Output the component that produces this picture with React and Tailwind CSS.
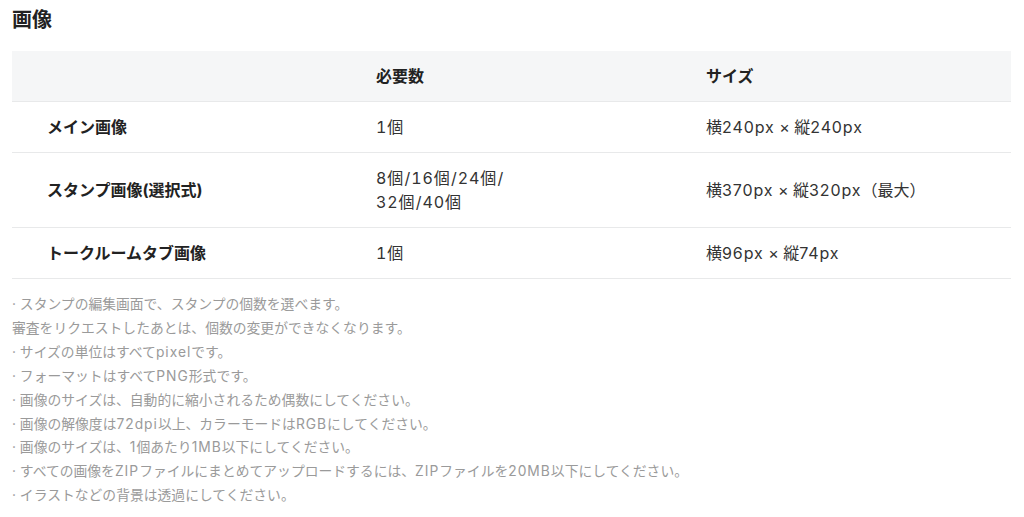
function Mixed({ text, latin, slash }) {
  const parts = text.split(/([A-Za-z0-9]+|\/)/);
  return (
    <>
      {parts.map((p, i) =>
        i % 2 === 1 ? (
          <span key={i} className={p === "/" ? slash || latin : latin}>
            {p}
          </span>
        ) : (
          <span key={i}>{p}</span>
        )
      )}
    </>
  );
}

export default function App() {
  const rows = [
    { name: "メイン画像", count: ["1個"], size: "横240px × 縦240px" },
    { name: "スタンプ画像(選択式)", count: ["8個/16個/24個/", "32個/40個"], size: "横370px × 縦320px（最大）" },
    { name: "トークルームタブ画像", count: ["1個"], size: "横96px × 縦74px" },
  ];
  const notes = [
    "· スタンプの編集画面で、スタンプの個数を選べます。",
    "審査をリクエストしたあとは、個数の変更ができなくなります。",
    "· サイズの単位はすべてpixelです。",
    "· フォーマットはすべてPNG形式です。",
    "· 画像のサイズは、自動的に縮小されるため偶数にしてください。",
    "· 画像の解像度は72dpi以上、カラーモードはRGBにしてください。",
    "· 画像のサイズは、1個あたり1MB以下にしてください。",
    "· すべての画像をZIPファイルにまとめてアップロードするには、ZIPファイルを20MB以下にしてください。",
    "· イラストなどの背景は透過にしてください。",
  ];
  return (
    <div
      className="w-[1024px] h-[517px] bg-white px-[12px] pt-[6px] overflow-hidden"
      style={{ fontFamily: 'Inter, "Noto Sans CJK JP", "Noto Sans", sans-serif' }}
    >
      <h1 className="text-[20px] font-bold leading-[28px] text-[#222]">画像</h1>
      <div className="mt-[17px] w-[999px]">
        <div className="grid grid-cols-[329px_330px_1fr] bg-[#f5f6f7] border-b border-[#e8e9ea] text-[16px] font-bold text-[#222] leading-[24px] py-[13px]">
          <div></div>
          <div className="pl-[35px]">必要数</div>
          <div className="pl-[35px]">サイズ</div>
        </div>
        {rows.map((r) => (
          <div
            key={r.name}
            className="grid grid-cols-[329px_330px_1fr] items-center border-b border-[#e8e9ea] text-[16px] leading-[24px] py-[13px] text-[#333]"
          >
            <div className="pl-[35px] font-bold text-[#222]">{r.name}</div>
            <div className="pl-[35px] tabular-nums">
              {r.count.map((c) => (
                <div key={c}>
                  <Mixed text={c} latin="tracking-[0.9px]" slash="px-[1.1px]" />
                </div>
              ))}
            </div>
            <div className="pl-[35px]">
              <Mixed text={r.size} latin="tracking-[0.9px]" />
            </div>
          </div>
        ))}
      </div>
      <div className="mt-[14px] text-[13.8px] leading-[23.9px] text-[#9a9a9a]">
        {notes.map((n) => (
          <div key={n}>
            <Mixed text={n} latin="tracking-[1px]" />
          </div>
        ))}
      </div>
    </div>
  );
}
